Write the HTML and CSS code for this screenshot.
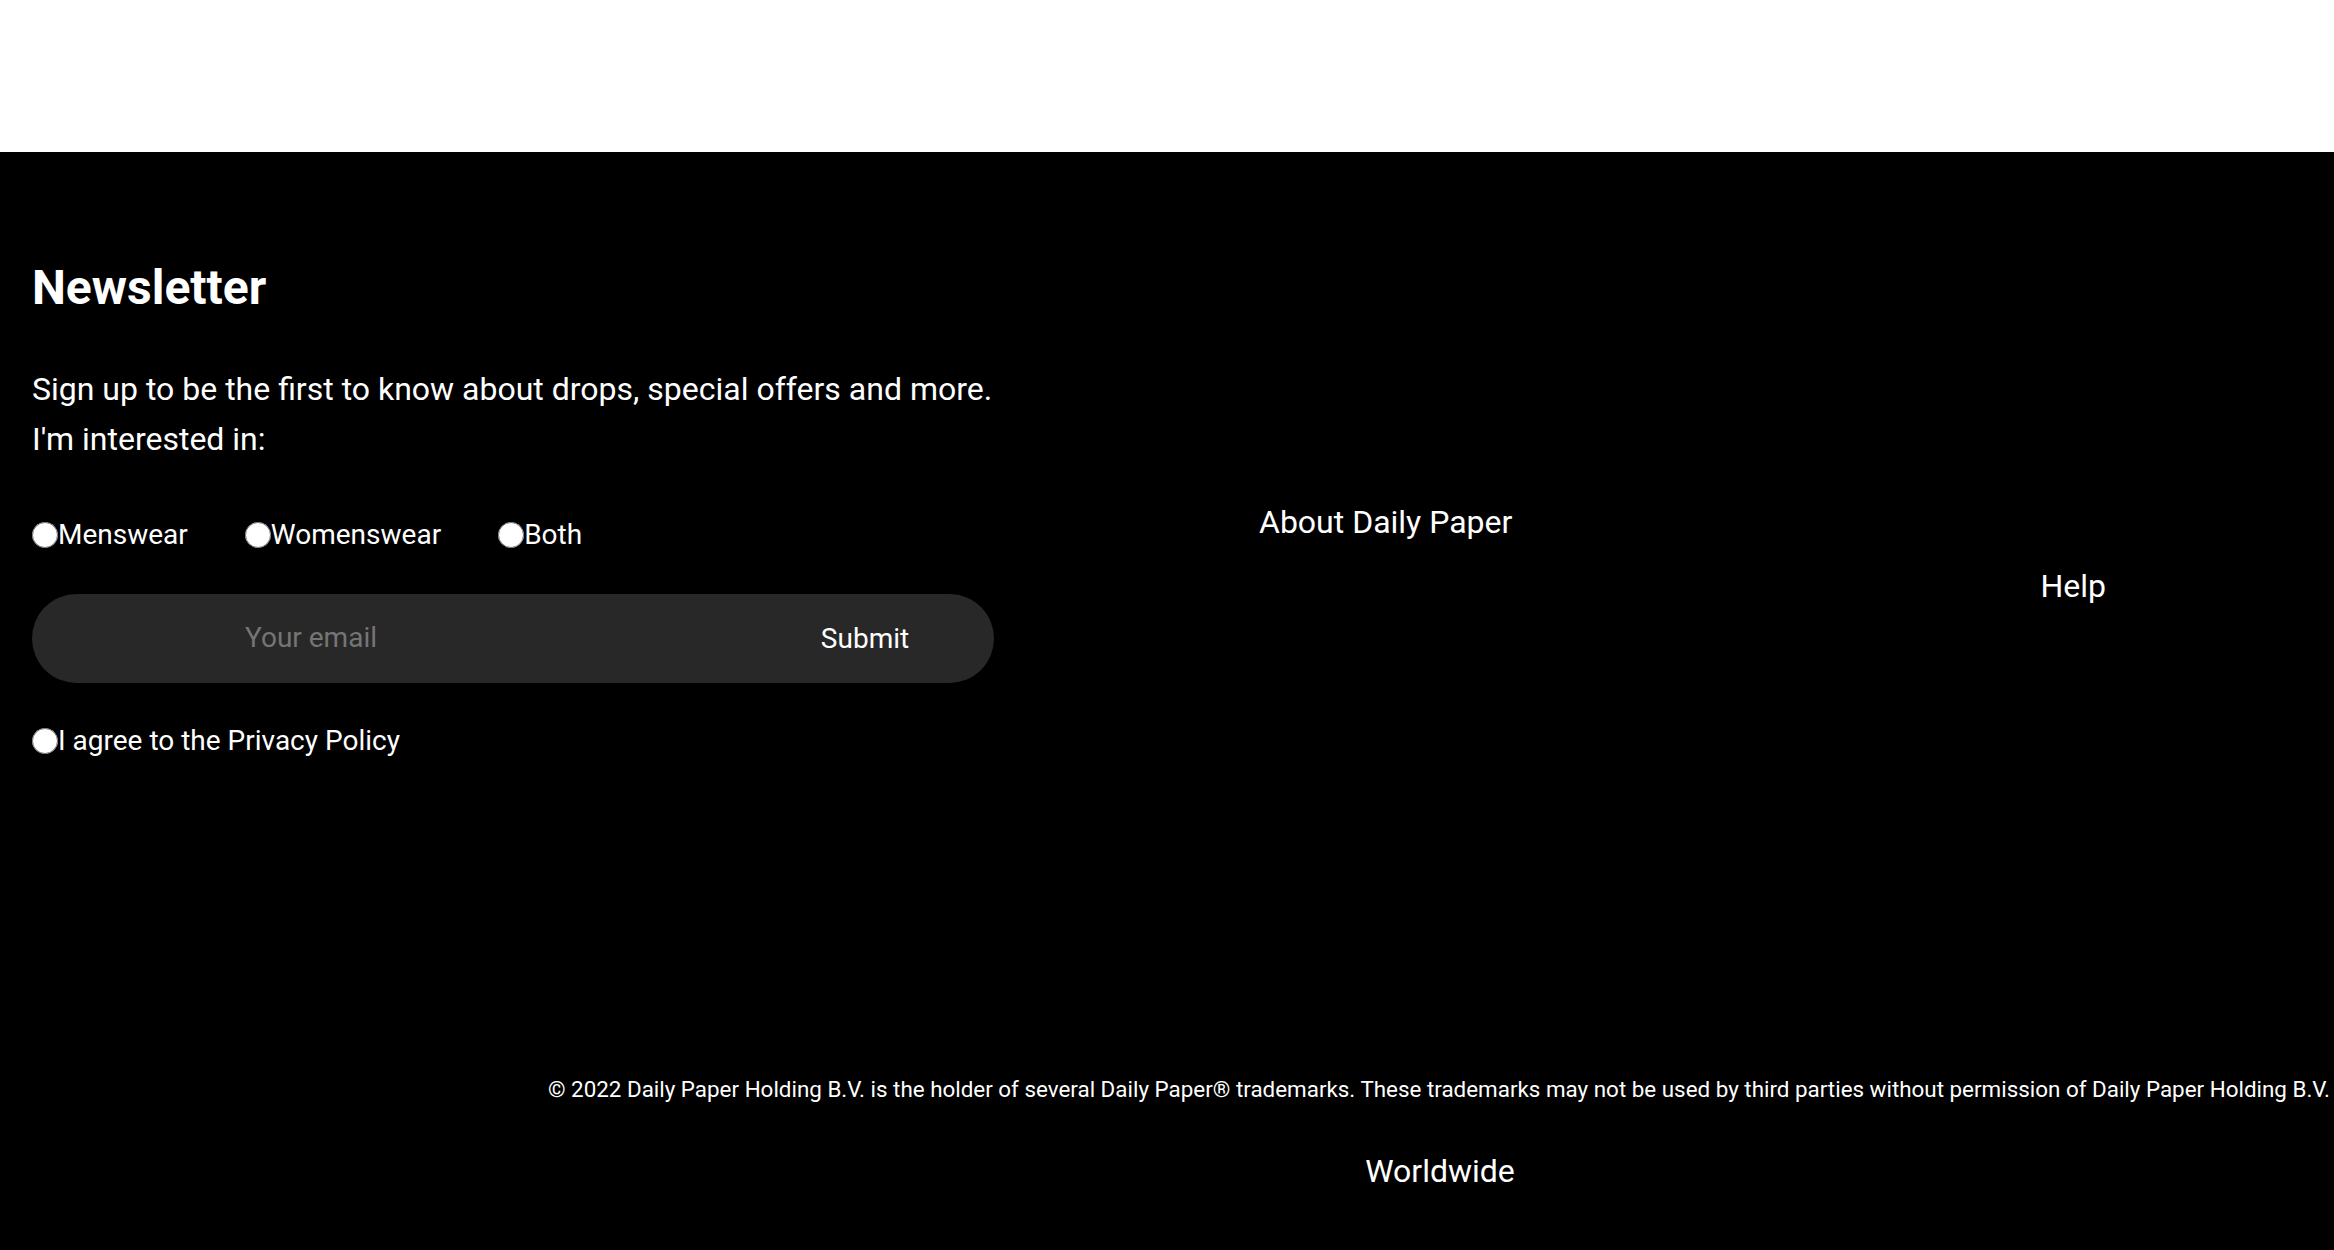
FILE: index.html
```html
<!DOCTYPE html>
<html lang="en">
<head>
<meta charset="utf-8">
<title>Daily Paper</title>
<link rel="stylesheet" href="styles.css">
</head>
<body>
<header class="top-bar"></header>
<footer class="footer">
  <div class="footer-top">
    <section class="newsletter">
      <h2 class="newsletter-title">Newsletter</h2>
      <p class="newsletter-text">Sign up to be the first to know about drops, special offers and more.<br>I'm interested in:</p>
      <div class="choices">
        <label class="choice"><input type="radio" name="interest" class="radio">Menswear</label>
        <label class="choice"><input type="radio" name="interest" class="radio">Womenswear</label>
        <label class="choice"><input type="radio" name="interest" class="radio">Both</label>
      </div>
      <form class="signup">
        <input class="email" type="email" placeholder="Your email">
        <button class="submit" type="button">Submit</button>
      </form>
      <label class="choice agree"><input type="radio" class="radio">I agree to the Privacy Policy</label>
    </section>
    <nav class="footer-nav">
      <div class="nav-item about">About Daily Paper</div>
      <div class="nav-item help">Help</div>
    </nav>
  </div>
  <p class="copyright">© 2022 Daily Paper Holding B.V. is the holder of several Daily Paper® trademarks. These trademarks may not be used by third parties without permission of Daily Paper Holding B.V.</p>
  <div class="region">Worldwide</div>
</footer>
</body>
</html>
```
FILE: styles.css
```css
html, body {
  margin: 0;
  padding: 0;
  background: #000;
}
body {
  font-family: Roboto, "Liberation Sans", sans-serif;
  color: #fff;
  min-height: 1250px;
}
.top-bar {
  height: 152px;
  background: #fff;
}
.footer {
  background: #000;
  padding-top: 108px;
  padding-bottom: 60px;
}
.footer-top {
  display: flex;
  align-items: flex-start;
}
.newsletter {
  width: 962px;
  padding-left: 32px;
}
.newsletter-title {
  margin: 0;
  font-size: 48px;
  line-height: 56px;
  font-weight: 700;
}
.newsletter-text {
  margin: 48px 0 0;
  font-size: 32px;
  line-height: 50px;
}
.choices {
  display: flex;
  gap: 57px;
  margin-top: 51px;
}
.choice {
  display: flex;
  align-items: center;
  font-size: 28px;
  line-height: 40px;
}
.radio {
  width: 26px;
  height: 26px;
  margin: 0;
}
.signup {
  display: flex;
  align-items: center;
  height: 89px;
  margin: 39px 0 0;
  background: #282828;
  border-radius: 45px;
}
.email {
  flex: 1;
  min-width: 0;
  height: 100%;
  padding: 0 0 3px 213px;
  border: 0;
  background: transparent;
  color: #fff;
  font-family: Roboto, "Liberation Sans", sans-serif;
  font-size: 28px;
  outline: none;
}
.email::placeholder {
  color: #757575;
}
.submit {
  width: 254px;
  height: 100%;
  padding: 0 4px 0 0;
  border: 0;
  background: transparent;
  color: #fff;
  font-family: Roboto, "Liberation Sans", sans-serif;
  font-size: 28px;
}
.agree {
  margin-top: 38px;
}
.footer-nav {
  display: flex;
  align-items: flex-start;
  padding-left: 265px;
  gap: 528px;
}
.nav-item {
  font-size: 32px;
  line-height: 40px;
}
.about {
  margin-top: 242px;
}
.help {
  margin-top: 306px;
}
.copyright {
  margin: 313px 0 0;
  padding-right: 4px;
  text-align: right;
  font-size: 22.4px;
  line-height: 30px;
}
.region {
  margin-top: 47px;
  padding-left: 546px;
  text-align: center;
  font-size: 32px;
  line-height: 40px;
}
```
